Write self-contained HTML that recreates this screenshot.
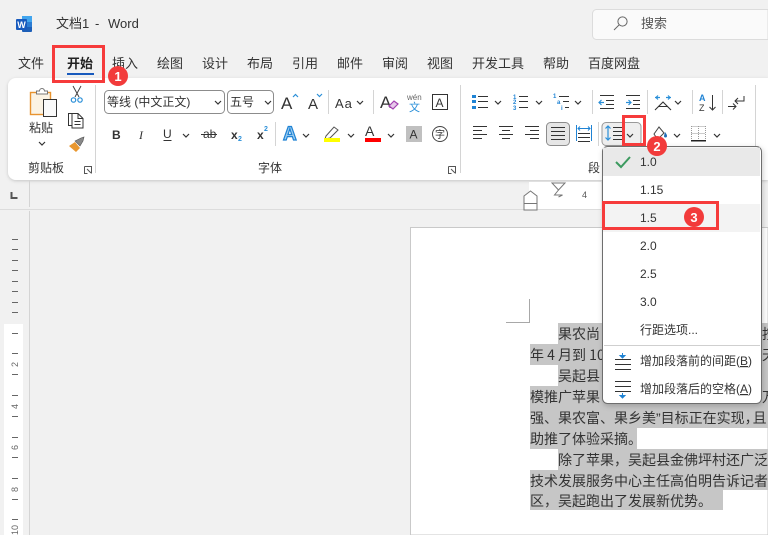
<!DOCTYPE html>
<html><head><meta charset="utf-8"><style>
html,body{margin:0;padding:0;width:768px;height:535px;overflow:hidden;background:#f1f1f1}
svg{display:block}
text{font-family:"Liberation Sans","Noto Sans CJK SC",sans-serif;fill:#333}
.t{font-size:13px}.s{font-size:12px}
.d{font-size:14px;fill:#333;font-family:"Noto Sans CJK SC",sans-serif;font-weight:400}
.l{stroke:#333;stroke-width:1;fill:none}
.b{stroke:#2a8fd8;stroke-width:1.2;fill:none}
.div{stroke:#d4d4d4;stroke-width:1}
.badge{fill:#f23b3b}
.bt{font-size:13px;fill:#fff;font-weight:bold;text-anchor:middle}
.red{fill:none;stroke:#f63b3b;stroke-width:3}
</style></head><body>
<svg width="768" height="535" viewBox="0 0 768 535" xmlns="http://www.w3.org/2000/svg">
<defs>
<filter id="sh" x="-5%" y="-10%" width="110%" height="125%"><feDropShadow dx="0" dy="1" stdDeviation="1.5" flood-color="#000" flood-opacity=".18"/></filter>
<filter id="ms" x="-10%" y="-10%" width="120%" height="120%"><feDropShadow dx="1" dy="2" stdDeviation="3" flood-color="#000" flood-opacity=".2"/></filter>
<symbol id="ch" viewBox="0 0 8 5" overflow="visible"><path d="M1 1l3 3 3-3" fill="none" stroke="#333" stroke-width="1.2"/></symbol>
</defs>
<rect width="768" height="535" fill="#f1f1f1"/>

<!-- title bar -->
<rect x="22" y="16" width="10" height="16" rx="1" fill="#1d5fb8"/>
<rect x="22" y="16" width="10" height="6" fill="#41a5ee"/>
<rect x="22" y="22" width="10" height="5" fill="#2b7cd3"/>
<rect x="16" y="19" width="11" height="11" rx="1" fill="#185abd"/>
<text x="21.5" y="28" style="font-size:9px;font-weight:bold;fill:#fff" text-anchor="middle">W</text>
<text x="56" y="28" class="t">文档1</text>
<text x="95" y="28" class="t">-</text>
<text x="108" y="28" class="t">Word</text>

<path d="M768 9.500H596.500a4 4 0 0 0-4 4v22a4 4 0 0 0 4 4H768z" fill="#fafafa" stroke="#dcdcdc"/>
<circle cx="622.500" cy="21.500" r="4.600" fill="none" stroke="#666"/>
<path d="M619 25l-5 5" fill="none" stroke="#666"/>
<text x="641" y="28" class="t" style="fill:#555">搜索</text>

<!-- tabs -->
<text x="18" y="68" class="t">文件</text>
<text x="67" y="68" class="t" style="font-weight:bold;fill:#222">开始</text>
<text x="112" y="68" class="t">插入</text>
<text x="157" y="68" class="t">绘图</text>
<text x="202" y="68" class="t">设计</text>
<text x="247" y="68" class="t">布局</text>
<text x="292" y="68" class="t">引用</text>
<text x="337" y="68" class="t">邮件</text>
<text x="382" y="68" class="t">审阅</text>
<text x="427" y="68" class="t">视图</text>
<text x="472" y="68" class="t">开发工具</text>
<text x="543" y="68" class="t">帮助</text>
<text x="588" y="68" class="t">百度网盘</text>
<rect x="67" y="73" width="27" height="2" fill="#185abd"/>

<!-- ribbon panel -->
<path d="M768 78H16a8 8 0 0 0-8 8v86a8 8 0 0 0 8 8h752z" fill="#fff" filter="url(#sh)"/>

<!-- horizontal ruler -->
<rect x="529" y="182" width="72" height="27" fill="#fff"/>
<rect x="0" y="209" width="601" height="1" fill="#dcdcdc"/>
<path d="M29.500 180v27M29.500 211v324" stroke="#d4d4d4"/>
<path d="M11.500 192v6h6" fill="none" stroke="#555" stroke-width="2"/>
<path d="M552 183h13l-6.500 7z" fill="#fff" stroke="#777"/>
<path d="M558.500 190l-4 5h8l-4 2" fill="none" stroke="#777"/>
<path d="M524 196l6.500-5 6.500 5v14h-13z" fill="#fff" stroke="#777"/>
<path d="M524 203.500h13" stroke="#777"/>
<text x="582" y="198" style="font-size:9px;fill:#555">4</text>

<!-- vertical ruler -->
<rect x="4" y="324" width="19" height="211" fill="#fff"/>
<path stroke="#666" stroke-width="1" d="M12 239.500h6M12 249.500h6M12 260.500h6M12 270.500h6M12 281.500h6M12 291.500h6M12 302.500h6M12 312.500h6M12 333.500h6M12 353.500h6M12 374.500h6M12 395.500h6M12 416.500h6M12 437.500h6M12 457.500h6M12 478.500h6M12 499.500h6M12 519.500h6"/>
<text transform="translate(18,367) rotate(-90)" style="font-size:9px;fill:#666">2</text>
<text transform="translate(18,409) rotate(-90)" style="font-size:9px;fill:#666">4</text>
<text transform="translate(18,450) rotate(-90)" style="font-size:9px;fill:#666">6</text>
<text transform="translate(18,492) rotate(-90)" style="font-size:9px;fill:#666">8</text>
<text transform="translate(18,535) rotate(-90)" style="font-size:9px;fill:#666">10</text>

<!-- page -->
<path d="M410.500 535V227.500H768V535z" fill="#fff" stroke="#c9c9c9"/>
<path d="M529.500 299v23.500H506" fill="none" stroke="#a8a8a8"/>
<g fill="#c6c6c6">
<rect x="558" y="323" width="210" height="21"/>
<rect x="530" y="344" width="238" height="21"/>
<rect x="558" y="365" width="210" height="21"/>
<rect x="530" y="386" width="238" height="21"/>
<rect x="530" y="407" width="238" height="21"/>
<rect x="530" y="428" width="107" height="21"/>
<rect x="558" y="449" width="210" height="21"/>
<rect x="530" y="470" width="238" height="20"/>
<rect x="530" y="490" width="193" height="20"/>
</g>
<text x="558" y="339" class="d">果农尚</text>
<text x="530" y="360" class="d">年 4 月到 10</text>
<text x="558" y="381" class="d">吴起县</text>
<text x="530" y="402" class="d">模推广苹果</text>
<text x="530" y="423" class="d">强、果农富、果乡美<tspan style="font-family:'Liberation Sans'">&#x201D;</tspan>目标正在实现&#xFF0C;<tspan dx="-6">且</tspan></text>
<text x="530" y="444" class="d">助推了体验采摘。</text>
<text x="558" y="465" class="d">除了苹果&#xFF0C;吴起县金佛坪村还广泛</text>
<text x="530" y="486" class="d">技术发展服务中心主任高伯明告诉记者</text>
<text x="530" y="506" class="d">区&#xFF0C;吴起跑出了发展新优势。</text>
<text x="762" y="339" class="d">按</text>
<text x="762" y="360" class="d">天</text>
<text x="762" y="381" class="d">&#x201C;</text>
<text x="762" y="402" class="d">万</text>

<!-- clipboard group -->
<rect x="30.500" y="92.500" width="20" height="22" fill="#fbf3e4" stroke="#e8932f" stroke-width="1.400"/>
<path d="M36.500 94v-3h3a2.500 2.500 0 0 1 5 0h3v3z" fill="#fff" stroke="#777"/>
<rect x="43.500" y="99.500" width="13" height="17" fill="#fafafa" stroke="#333"/>
<text x="29" y="132" class="s">粘贴</text>
<use href="#ch" x="38" y="141" width="8" height="5"/>
<path d="M73 86l6 11M81 86l-6 11" stroke="#444" fill="none"/>
<circle cx="73.500" cy="100" r="2.200" fill="none" stroke="#2a8fd8" stroke-width="1.200"/>
<circle cx="80" cy="100" r="2.200" fill="none" stroke="#2a8fd8" stroke-width="1.200"/>
<path d="M72 113.500h-3.500v12h3M72 113.500h6l5 5v9.500H72z M78 113.500v5h5 M74.500 121.500h6 M74.500 124.500h6" fill="none" stroke="#333"/>
<path d="M69 146l6-4 5 6-4 4z" fill="#e9972f"/>
<path d="M75 141l6-3 3-1-1 4-3 5z" fill="#888" stroke="#555" stroke-width=".6"/>
<text x="28" y="172" class="s">剪贴板</text>
<path d="M84.500 166.500h7v7M84.500 166.500v7h3M87 169l4 4" fill="none" stroke="#555"/>
<path class="div" d="M95.500 85v88"/>

<!-- font group -->
<rect x="104.500" y="90.500" width="120" height="23" rx="4" fill="#fff" stroke="#8c8c8c"/>
<text x="107" y="106" class="s">等线 (中文正文)</text>
<use href="#ch" x="214" y="100" width="8" height="5"/>
<rect x="227.500" y="90.500" width="46" height="23" rx="4" fill="#fff" stroke="#8c8c8c"/>
<text x="230" y="106" class="s">五号</text>
<use href="#ch" x="264" y="100" width="8" height="5"/>
<text x="281" y="109" style="font-size:17px">A</text>
<path d="M293 97l2.500-2.500 2.500 2.500" fill="none" stroke="#2a8fd8" stroke-width="1.200"/>
<text x="308" y="109" style="font-size:15px">A</text>
<path d="M317 94l2.500 2.500 2.500-2.500" fill="none" stroke="#2a8fd8" stroke-width="1.200"/>
<path class="div" d="M328.500 90v24"/>
<text x="335" y="108" style="font-size:13px;letter-spacing:1px">Aa</text>
<use href="#ch" x="356" y="100" width="8" height="5"/>
<path class="div" d="M373.500 90v24"/>
<text x="380" y="108" style="font-size:17px">A</text>
<path d="M389 106l5-5 4 3-5 5z" fill="#e6c8ea" stroke="#a23fb0" stroke-width="1.200"/>
<text x="407" y="100" style="font-size:8px;fill:#666">wén</text>
<text x="409" y="111" style="font-size:11px;fill:#2a8fd8">文</text>
<rect x="432.500" y="94.500" width="15" height="15" fill="none" stroke="#333"/>
<text x="435.500" y="107" style="font-size:12px">A</text>

<text x="112" y="139" style="font-size:12px;font-weight:bold">B</text>
<text x="139" y="139" style="font-size:12px;font-style:italic;font-family:'Liberation Serif'">I</text>
<text x="163" y="138" style="font-size:12px">U</text><path d="M163.500 140.500h8" stroke="#333"/>
<use href="#ch" x="182" y="133" width="8" height="5"/>
<text x="203" y="138" style="font-size:12px">ab</text><path d="M201 134.500h16" stroke="#333"/>
<text x="231" y="139" style="font-size:12px;font-weight:bold">x</text><text x="238" y="141" style="font-size:7px;font-weight:bold;fill:#2a8fd8">2</text>
<text x="257" y="139" style="font-size:12px;font-weight:bold">x</text><text x="264" y="131" style="font-size:7px;font-weight:bold;fill:#2a8fd8">2</text>
<path class="div" d="M275.500 122v24"/>
<text x="283" y="140" style="font-size:19px;font-weight:bold;fill:#9fcdf0;stroke:#1f83d4;stroke-width:1.200">A</text>
<use href="#ch" x="302" y="133" width="8" height="5"/>
<path d="M326 136l8-9 4 3-8 8-5 1z" fill="#fff" stroke="#555"/>
<rect x="324" y="138" width="16" height="4" fill="#ffff00"/>
<use href="#ch" x="347" y="133" width="8" height="5"/>
<text x="365" y="136" style="font-size:14px">A</text>
<rect x="365" y="138" width="16" height="4" fill="#ff0000"/>
<use href="#ch" x="387" y="133" width="8" height="5"/>
<rect x="406" y="126" width="16" height="16" fill="#c0c0c0"/>
<text x="409.500" y="138.500" style="font-size:12px">A</text>
<circle cx="440" cy="134" r="7.500" fill="none" stroke="#444"/>
<text x="435" y="138" style="font-size:10px">字</text>
<text x="258" y="172" class="s">字体</text>
<path d="M448.500 166.500h7v7M448.500 166.500v7h3M451 169l4 4" fill="none" stroke="#555"/>
<path class="div" d="M460.500 85v88"/>

<!-- paragraph group row 1 -->
<g fill="#1f83d4"><rect x="472" y="95" width="4" height="3"/><rect x="472" y="100" width="4" height="3"/><rect x="472" y="106" width="4" height="3"/></g>
<path class="l" d="M478 96.500h10M478 101.500h10M478 107.500h10"/>
<use href="#ch" x="494" y="100" width="8" height="5"/>
<text x="513" y="99" style="font-size:6px;fill:#1f83d4;font-weight:bold">1</text><text x="513" y="104" style="font-size:6px;fill:#1f83d4;font-weight:bold">2</text><text x="513" y="110" style="font-size:6px;fill:#1f83d4;font-weight:bold">3</text>
<path class="l" d="M519 96.500h9M519 101.500h9M519 107.500h9"/>
<use href="#ch" x="535" y="100" width="8" height="5"/>
<text x="553" y="98" style="font-size:6px;fill:#1f83d4;font-weight:bold">1</text><text x="557" y="104" style="font-size:6px;fill:#1f83d4;font-weight:bold">a</text><text x="561" y="110" style="font-size:6px;fill:#1f83d4;font-weight:bold">i</text>
<path class="l" d="M559 96.500h10M563 101.500h6M565 107.500h4"/>
<use href="#ch" x="574" y="100" width="8" height="5"/>
<path class="div" d="M592.500 90v24"/>
<path class="l" d="M600 95.500h14M606 100.500h8M606 104.500h8M600 108.500h14"/>
<path class="b" d="M604 102.500h-5m2.500-2.500l-2.500 2.500 2.500 2.500"/>
<path class="l" d="M626 95.500h14M633 100.500h7M633 104.500h7M626 108.500h14"/>
<path class="b" d="M626 102.500h5m-2.500-2.500l2.500 2.500-2.500 2.500"/>
<path class="div" d="M647.500 90v24"/>
<path class="b" d="M655 97.500h5m-2-2l-2 2 2 2M671 97.500h-5m2-2l2 2-2 2"/>
<path d="M655 110l8-8 8 8M658 106.500h10" fill="none" stroke="#333" stroke-width="1.100"/>
<use href="#ch" x="674" y="100" width="8" height="5"/>
<path class="div" d="M692.500 90v24"/>
<text x="699" y="101" style="font-size:9px;font-weight:bold;fill:#1f83d4">A</text>
<text x="699" y="111" style="font-size:9px;fill:#333">Z</text>
<path class="l" d="M712.500 95v15m-3-3l3 3 3-3"/>
<path class="div" d="M722.500 90v24"/>
<path class="l" d="M744 96v5h-9m3-3l-3 3 3 3"/>
<path class="l" d="M728 106.500h8m-3-3l3 3-3 3"/>
<path class="div" d="M755.500 85v88"/>

<!-- paragraph group row 2 -->
<path class="l" d="M473 126.500h14M473 130.500h9M473 134.500h14M473 138.500h9"/>
<path class="l" d="M499 126.500h14M502 130.500h8M499 134.500h14M502 138.500h8"/>
<path class="l" d="M525 126.500h14M530 130.500h9M525 134.500h14M530 138.500h9"/>
<rect x="546.500" y="122.500" width="23" height="23" rx="4" fill="#e6e6e6" stroke="#8c8c8c"/>
<path class="l" d="M551 127.500h14M551 131.500h14M551 135.500h14M551 139.500h14"/>
<path d="M576.500 125v16M591.500 125v16" stroke="#1f83d4"/>
<path d="M578 128.500h12m-10-2l-2 2 2 2m8-4l2 2-2 2" fill="none" stroke="#1f83d4"/>
<path class="l" d="M578 133.500h12M578 137.500h12M578 141.500h12"/>
<path class="div" d="M598.500 122v24"/>
<rect x="602" y="122.500" width="39" height="23" rx="4" fill="#eeeeee" stroke="#999"/>
<path class="b" d="M608 126v14m-2.500-11.500L608 126l2.500 2.500m-5 9L608 140l2.500-2.500"/>
<path class="l" d="M613 127.500h9M613 131.500h9M613 135.500h9M613 139.500h9"/>
<use href="#ch" x="626" y="133" width="8" height="5"/>
<path d="M654 134l5-7 5 6-4 4h-4z" fill="#fff" stroke="#444"/>
<path d="M665 132c1.500 2 2 3 2 4a1.500 1.500 0 0 1-3 0" fill="#1f6fb8"/>
<use href="#ch" x="673" y="133" width="8" height="5"/>
<path d="M691.500 126.500h14M691.500 133.500h14M698.500 126v14M691.500 126v14M705.500 126v14" stroke="#999" stroke-dasharray="1 1" fill="none"/>
<rect x="691" y="140" width="15" height="1.500" fill="#222"/>
<use href="#ch" x="713" y="133" width="8" height="5"/>
<text x="588" y="172" class="s">段</text>

<!-- dropdown -->
<rect x="602.500" y="146.500" width="159" height="257" rx="5" fill="#fff" stroke="#6e6e6e" filter="url(#ms)"/>
<rect x="603" y="147.500" width="157" height="28.500" fill="#e9e9e9"/>
<rect x="603" y="204" width="157" height="28" fill="#f3f3f3"/>
<path d="M616 162l5 5 9-10" fill="none" stroke="#3c9a5f" stroke-width="2"/>
<text x="640" y="166" class="s">1.0</text>
<text x="640" y="194" class="s">1.15</text>
<text x="640" y="222" class="s">1.5</text>
<text x="640" y="250" class="s">2.0</text>
<text x="640" y="278" class="s">2.5</text>
<text x="640" y="306" class="s">3.0</text>
<text x="640" y="334" class="s">行距选项...</text>
<text x="640" y="365" class="s">增加段落前的间距(<tspan text-decoration="underline">B</tspan>)</text>
<text x="640" y="393" class="s">增加段落后的空格(<tspan text-decoration="underline">A</tspan>)</text>
<path d="M604 345.500h156" stroke="#cfcfcf"/>
<path class="l" d="M615 359.500h16M615 364.500h16M615 369.500h16"/>
<path d="M622.500 353v4" stroke="#1f83d4"/><path d="M620 355.500l2.500 2.500 2.500-2.500z" fill="#1f83d4" stroke="#1f83d4"/>
<path class="l" d="M615 381.500h16M615 386.500h16M615 391.500h16"/>
<path d="M622.500 393v4" stroke="#1f83d4"/><path d="M620 395.500l2.500 2.500 2.500-2.500z" fill="#1f83d4" stroke="#1f83d4"/>

<!-- annotations -->
<rect x="53.500" y="46.500" width="50" height="35" class="red"/>
<circle cx="118" cy="76" r="10" class="badge"/>
<text x="118" y="81" class="bt">1</text>
<rect x="623.500" y="116.500" width="21" height="28" class="red"/>
<circle cx="657" cy="146" r="10" class="badge"/>
<text x="657" y="151" class="bt">2</text>
<rect x="603.500" y="202.500" width="114" height="26" class="red"/>
<circle cx="694" cy="217" r="10" class="badge"/>
<text x="694" y="222" class="bt">3</text>
</svg>
</body></html>
